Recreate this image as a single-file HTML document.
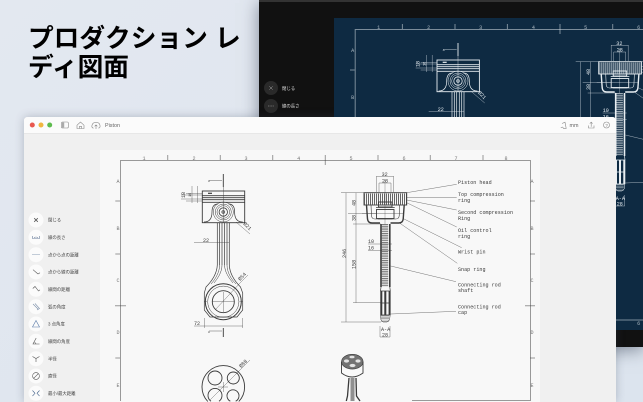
<!DOCTYPE html>
<html lang="ja">
<head>
<meta charset="utf-8">
<title>Piston</title>
<style>
html,body{margin:0;padding:0;background:#dfe6ef;overflow:hidden}
#p{position:relative;width:643px;height:402px;overflow:hidden;background:linear-gradient(135deg,#e3e8f0,#dce4ee);font-family:"Liberation Sans","Noto Sans CJK JP",sans-serif}
h1{position:absolute;left:28px;top:25px;margin:0;font-size:25.7px;line-height:29px;font-weight:700;color:#000;white-space:nowrap;font-family:"Liberation Sans","Noto Sans CJK JP",sans-serif;filter:blur(.25px)}
#dark{position:absolute;left:259px;top:0;width:384px;height:347px;background:#111;border-top:2px solid #333;box-sizing:border-box;box-shadow:0 3px 16px rgba(50,60,80,.55)}
#win{position:absolute;left:24px;top:117px;width:592px;height:285px;background:#f0f0f0;border-radius:4px 4px 0 0;box-shadow:0 0 9px rgba(60,70,90,.3)}
svg{position:absolute;left:0;top:0;filter:blur(.3px)}
.m{font-family:"Liberation Mono",monospace;font-size:5.1px;stroke:none;fill:currentColor}
.l{font-size:4.4px;fill:#444;stroke:none}
.w{font-size:4.4px;fill:#ddd;stroke:none}
</style>
</head>
<body>
<div id="p">
<h1>プロダクション レ<br>ディ図面</h1>
<div id="dark"></div>
<div id="win"></div>
<svg width="643" height="402" viewBox="0 0 643 402" font-family="'Liberation Sans','Noto Sans CJK JP',sans-serif">
<defs>
<clipPath id="nv"><rect x="334" y="18" width="309" height="312"/></clipPath>
<clipPath id="cv"><rect x="100" y="150" width="440" height="252"/></clipPath>
<g id="d" fill="none" stroke="currentColor" stroke-width=".5">
  <!-- frame -->
  <g stroke-opacity=".5" stroke-width="1">
    <path d="M120.5 401V160.5H530.5V401"/>
    <path d="M167.7 155V160M220.3 155V160M272.7 155V160M325.3 155V165M378 155V160M430.3 155V160M483 155V160M115.3 201H120M115.3 254H120M115 305.7H126M115.3 358H120M530 201H535M530 254H535M525 305.7H535M530 358H535M412 400.5H530"/>
  </g>
  <g text-anchor="middle" class="m" fill-opacity=".7">
    <text x="144" y="160" class="m">1</text><text x="194" y="160" class="m">2</text><text x="246" y="160" class="m">3</text><text x="298.7" y="160" class="m">4</text><text x="351" y="160" class="m">5</text><text x="404" y="160" class="m">6</text><text x="456" y="160" class="m">7</text><text x="506" y="160" class="m">8</text>
    <text x="118" y="183" class="m">A</text><text x="118" y="230" class="m">B</text><text x="118" y="282" class="m">C</text><text x="118" y="334" class="m">D</text><text x="118" y="387" class="m">E</text>
    <text x="532" y="183" class="m">A</text><text x="532" y="230" class="m">B</text><text x="532" y="282" class="m">C</text><text x="532" y="334" class="m">D</text><text x="532" y="387" class="m">E</text>
  </g>
  <!-- left view: piston -->
  <rect x="202.3" y="191" width="42.4" height="31.7" stroke-width=".9"/>
  <path d="M202.3 195.7H244.7M202.3 197.7H244.7M202.3 199.7H244.7M202.3 202.3H244.7" stroke-width=".9"/>
  <path d="M208 193.3H212" stroke-width="1.2"/>
  <path d="M223.3 174V187" stroke-width=".9"/>
  <path d="M209 180.7H222M223.3 187V222" stroke-width=".4"/>
  <path d="M204 222C210 222 212 218 212 212C212 207 214 204 218 204M242.7 222C236.6 222 234.6 218 234.6 212C234.6 207 232.6 204 228.6 204" stroke-width=".7"/>
  <circle cx="223.3" cy="212" r="10" stroke-width=".5"/>
  <circle cx="223.3" cy="212" r="8" stroke-width=".5"/>
  <circle cx="223.3" cy="212" r="6.3" stroke-width=".5"/>
  <circle cx="223.3" cy="212" r="4.2" stroke-width=".8"/>
  <circle cx="223.3" cy="212" r="1.6" fill="currentColor" fill-opacity=".5"/>
  <path d="M217.3 223V265M219.6 223V265M222 223V265M224.6 223V265M227 223V265M229.3 223V265" stroke-width=".7"/>
  <path d="M217.3 265C217 272 213 280 206 287L204.3 293V310L210 317H237L242.7 310V293L240.5 287C233.6 280 229.6 272 229.3 265" stroke-width=".7"/>
  <path d="M219.6 265C219.6 272 215.5 279 211 284M227 265C227 272 231 279 236 284M222 265C222 272 218 278 214 283M224.6 265C224.6 272 229 278 233 283" stroke-width=".5"/>
  <circle cx="223.3" cy="301.7" r="18" stroke-width="1"/>
  <circle cx="223.3" cy="301.7" r="15.6" stroke-width=".5"/>
  <circle cx="223.3" cy="301.7" r="11" stroke-width=".9"/>
  <path d="M223.3 292V312M212 301.7H234.6M215.5 309.5L240 283L248 275M204 301.7H207M239.6 301.7H242.7" stroke-width=".35"/>
  <path d="M204.3 318V328M242.7 318V328M194 326H242.7M194 242.3H229.3M236 222L250 234" stroke-width=".35"/>
  <path d="M223.3 328V337" stroke-width=".9"/>
  <path d="M209 331H222" stroke-width=".4"/>
  <!-- small dims -->
  <path d="M192 186V203M197.5 186V203M181 195H202M181 199H202M186 193.5H202M186 201H202" stroke-width=".35"/>
  <g class="m" font-size="4.6">
    <text x="203" y="242" class="m">22</text><text x="194" y="325" class="m">72</text>
    <text transform="translate(185 198) rotate(-90)" class="m">18</text>
    <text transform="translate(191 197) rotate(-90)" class="m" style="font-size:3.6px">16</text>
    <text transform="translate(243 224) rotate(45)" class="m">Ø21</text>
    <text transform="translate(240 281) rotate(-45)" class="m">Ø54</text>
    <text transform="translate(241 368) rotate(-45)" class="m">Ø88</text>
    <text x="208" y="182" class="m" style="font-size:3px">A</text>
    <text x="208" y="333" class="m" style="font-size:3px">A</text>
  </g>
  <!-- head bottom view, arcs stop at the canvas edge -->
  <path d="M207.8 401.5A21.3 21.3 0 1 1 238.8 401.5" stroke-width=".9"/>
  <circle cx="215" cy="378" r="7" stroke-width=".9"/>
  <circle cx="233.3" cy="378" r="6" stroke-width=".9"/>
  <path d="M211 401.2A7 7 0 1 1 219 401.2" stroke-width=".9"/>
  <path d="M230.3 401.2A6 6 0 1 1 235.7 401.2" stroke-width=".9"/>
  <path d="M210 400L250 360M223.3 382V392M218 387H228" stroke-width=".35"/>
  <!-- section view -->
  <path d="M364 199H406.7" stroke-width="11" stroke-dasharray=".9 1.1" stroke-opacity=".85"/>
  <rect x="364" y="192.7" width="42.7" height="12.3" stroke-width=".9"/>
  <path d="M366.5 205L367.5 219Q368 223 372 223H380M404.2 205L403.2 219Q402.7 223 398.7 223H390.5" stroke-width="1.4"/>
  <path d="M371 205L371.5 216Q372 219 375 219H378M399.7 205L399.2 216Q398.7 219 395.7 219H392.7" stroke-width=".6"/>
  <rect x="378.5" y="202" width="13.5" height="5" stroke-width=".9"/>
  <rect x="376.5" y="209.5" width="17.5" height="9" stroke-width=".9"/>
  <path d="M376 207.5H394.7M378 219H392.7" stroke-width=".7"/>
  <path d="M385 180V224" stroke-width=".3"/>
  <path d="M385 224V287" stroke-width="6.4" stroke-dasharray=".9 .9" stroke-opacity=".75"/>
  <path d="M381 224V287M389.8 224V287" stroke-width="1.6"/>
  <path d="M381 287L380.5 291M389.8 287L390.3 291" stroke-width=".7"/>
  <path d="M381.3 291V315M385.3 291V315M389.6 291V315" stroke-width="2"/>
  <path d="M380.3 291H390.3M380.3 303H390.3" stroke-width=".8"/>
  <path d="M380.5 315H390" stroke-width=".8"/>
  <path d="M385 315.5V322" stroke-width="8" stroke-dasharray=".7 .7" stroke-opacity=".55"/>
  <path d="M380.4 315L381 320L383 322H387L389.5 320L390.2 315" stroke-width=".5"/>
  <!-- section dims -->
  <path d="M346 192.7V322M356 192.7V302.7M341 192.7H364M341 322H381M353 224H381M353 302.7H381M348 213.7H404" stroke-width=".35"/>
  <path d="M376.5 176V192M393.5 176V192M379 183V192M391 183V192M376.5 176.5H393.5M379 183H391M368 244H392M368 250.5H392M380 326V337H390V326M376 213.7H362" stroke-width=".35"/>
  <g class="m">
    <text x="381.6" y="176" class="m">32</text><text x="382" y="182.5" class="m">28</text>
    <text x="368" y="243" class="m">10</text><text x="368" y="249.5" class="m">16</text>
    <text x="381" y="331" class="m">A-A</text><text x="382" y="336.5" class="m">28</text>
    <text transform="translate(346 258) rotate(-90)" class="m">246</text>
    <text transform="translate(355.5 206) rotate(-90)" class="m">48</text>
    <text transform="translate(355.5 221) rotate(-90)" class="m">38</text>
    <text transform="translate(355.5 269) rotate(-90)" class="m">158</text>
  </g>
  <!-- leaders -->
  <path d="M406.7 192.7L456.7 184.3M406.7 197.3H456.7M406.7 200L456.7 210M406.7 202.7L456.7 227M402.7 218.3L461.7 247.7M400 223.3L457.3 263.3M390.7 266L456 281.7M390.7 314L456 311.3" stroke-width=".35"/>
  <g class="m">
    <text x="458" y="183.8" class="m">Piston head</text>
    <text x="458" y="196" class="m">Top compression</text>
    <text x="458" y="202" class="m">ring</text>
    <text x="458" y="213.8" class="m">Second compression</text>
    <text x="458" y="219.8" class="m">Ring</text>
    <text x="458" y="231.8" class="m">Oil control</text>
    <text x="458" y="237.8" class="m">ring</text>
    <text x="458" y="253.4" class="m">Wrist pin</text>
    <text x="458" y="270.8" class="m">Snap ring</text>
    <text x="458" y="286.4" class="m">Connecting rod</text>
    <text x="458" y="292" class="m">shaft</text>
    <text x="458" y="308.4" class="m">Connecting rod</text>
    <text x="458" y="314" class="m">cap</text>
  </g>
  <!-- 3D piston -->
  <path d="M341.5 361.7V373Q352 381 363 373V361.7" fill="#fafafa" fill-opacity=".25" stroke-width=".9"/>
  <ellipse cx="352.3" cy="361.7" rx="10.8" ry="7.4" fill="currentColor" fill-opacity=".7" stroke-width=".6"/>
  <ellipse cx="352" cy="357" rx="2.6" ry="1.3" fill="#f8f8f8" stroke="none" fill-opacity=".85"/>
  <ellipse cx="346.5" cy="361" rx="2.6" ry="1.6" fill="#f8f8f8" stroke="none" fill-opacity=".85"/>
  <ellipse cx="358" cy="361" rx="2.6" ry="1.6" fill="#f8f8f8" stroke="none" fill-opacity=".85"/>
  <ellipse cx="352.5" cy="365.5" rx="3" ry="1.6" fill="#f8f8f8" stroke="none" fill-opacity=".85"/>
  <path d="M349 378L347.5 396L346.3 401M356 378L356.5 396L360 401" stroke-width="1.3"/>
  <path d="M352.5 378V401" stroke-width="4" stroke-opacity=".55"/>
</g>
</defs>

<!-- navy panel -->
<rect x="334" y="18" width="309" height="312" fill="#0e2a42"/>
<g clip-path="url(#nv)" style="color:#e8eef2">
  <use href="#d" x="234.7" y="-131"/>
  <path d="M355.2 320H643" fill="none" stroke="#e8eef2" stroke-opacity=".5" stroke-width="1"/>
  <text x="638.7" y="325" text-anchor="middle" class="m" fill-opacity=".7">6</text>
</g>
<!-- dark window side buttons -->
<circle cx="271" cy="88" r="7" fill="#2a2a2a"/>
<circle cx="271" cy="106" r="7" fill="#2a2a2a"/>
<path d="M269.3 86.3L272.7 89.7M272.7 86.3L269.3 89.7" stroke="#aaa" stroke-width=".5"/>
<path d="M268 106H274" stroke="#aaa" stroke-width=".6" stroke-dasharray="1 .6"/>
<text x="282" y="90" class="w">閉じる</text>
<text x="282" y="107.5" class="w">線の長さ</text>

<!-- window: repaint over navy -->
<path d="M24 402V121Q24 117 28 117H612Q616 117 616 121V402Z" fill="#f0f0f0"/>
<path d="M24 133V121Q24 117 28 117H612Q616 117 616 121V133Z" fill="#fbfbfb"/>
<path d="M24 133.5H616" stroke="#e4e4e4" stroke-width=".8"/>
<rect x="100" y="150" width="440" height="252" fill="#f8f8f8"/>
<g clip-path="url(#cv)" style="color:#3a3a3a">
  <use href="#d"/>
</g>

<!-- titlebar -->
<circle cx="32.3" cy="125" r="2.5" fill="#e8584f"/>
<circle cx="41" cy="125" r="2.5" fill="#f0b640"/>
<circle cx="49.7" cy="125" r="2.5" fill="#5dbb4e"/>
<g fill="none" stroke="#888" stroke-width=".6">
  <rect x="61.5" y="122" width="6.8" height="6" rx="1"/>
  <rect x="62" y="122.4" width="2.2" height="5.2" fill="#aaa" stroke="none"/>
  <path d="M77 125.2L80.5 122L84 125.2V128.5H77ZM79.5 128.5V126.3H81.5V128.5"/>
  <path d="M93.5 128.2Q91.3 127.6 92 125.4Q92.6 122.3 96 122.3Q99.5 122.3 100 125.4Q100.5 127.6 98.5 128.2M96 129V125M94.6 126.3L96 124.9L97.4 126.3"/>
  <path d="M562 123.5L565 122.2L566.2 128.4H563.5L562.5 126.8M560.8 127.6H562.2"/>
  <path d="M588.5 125.5V128H594V125.5M591.2 126.8V122.3M589.8 123.6L591.2 122.2L592.6 123.6"/>
  <circle cx="606.5" cy="125" r="3"/>
</g>
<text x="105" y="127" font-size="5.4" fill="#666">Piston</text>
<text x="569.5" y="127" font-size="5.4" fill="#666">mm</text>
<text x="605.4" y="126.8" font-size="4.5" fill="#777">?</text>

<!-- sidebar -->
<g fill="#fbfbfb">
  <circle cx="36" cy="220" r="7.5"/><circle cx="36" cy="237.3" r="7.5"/><circle cx="36" cy="254.7" r="7.5"/><circle cx="36" cy="272" r="7.5"/><circle cx="36" cy="289.3" r="7.5"/><circle cx="36" cy="306.7" r="7.5"/><circle cx="36" cy="324" r="7.5"/><circle cx="36" cy="341.3" r="7.5"/><circle cx="36" cy="358.7" r="7.5"/><circle cx="36" cy="376" r="7.5"/><circle cx="36" cy="393.3" r="7.5"/>
</g>
<g fill="none" stroke="#555" stroke-width=".6">
  <path d="M34.2 218.2L37.8 221.8M37.8 218.2L34.2 221.8" stroke-width=".8"/>
  <path d="M32.5 236V238.5H39.5V236M34.5 238V237M36 238V236.6M37.5 238V237" stroke="#6a7f9c"/>
  <path d="M32.5 254.7H39.5" stroke-dasharray="1 1" stroke="#46648c"/>
  <path d="M33 269.7L38 274M38 274L40 272.7" />
  <path d="M32.8 288.5L35 286.5L38.5 291L40 289.8"/>
  <path d="M33 304L38.5 309.5M35 303.5L39.5 308.5L37 310" stroke="#7d90aa"/>
  <path d="M36 320.5L32.5 327H39.5Z" stroke="#5a7ba8"/>
  <path d="M36.2 338L33 344H39.5M34.5 342.5Q35.7 342.7 36 344"/>
  <path d="M32.5 356.5L36 358.5L39.5 356.5M36 358.5V362"/>
  <circle cx="36" cy="376" r="3.4"/>
  <path d="M33.8 378.2L38.2 373.8"/>
  <path d="M32.5 390.5L35 393.3L32.5 396M39.5 390.5L37 393.3L39.5 396" stroke="#46648c"/>
</g>
<g class="l">
  <text x="48" y="221.6" class="l">閉じる</text>
  <text x="48" y="238.9" class="l">線の長さ</text>
  <text x="48" y="256.3" class="l">点から点の距離</text>
  <text x="48" y="273.6" class="l">点から線の距離</text>
  <text x="48" y="290.9" class="l">線間の距離</text>
  <text x="48" y="308.3" class="l">弧の角度</text>
  <text x="48" y="325.6" class="l">3 点角度</text>
  <text x="48" y="342.9" class="l">線間の角度</text>
  <text x="48" y="360.3" class="l">半径</text>
  <text x="48" y="377.6" class="l">直径</text>
  <text x="48" y="394.9" class="l">最小/最大距離</text>
</g>
</svg>
</div>
</body>
</html>
